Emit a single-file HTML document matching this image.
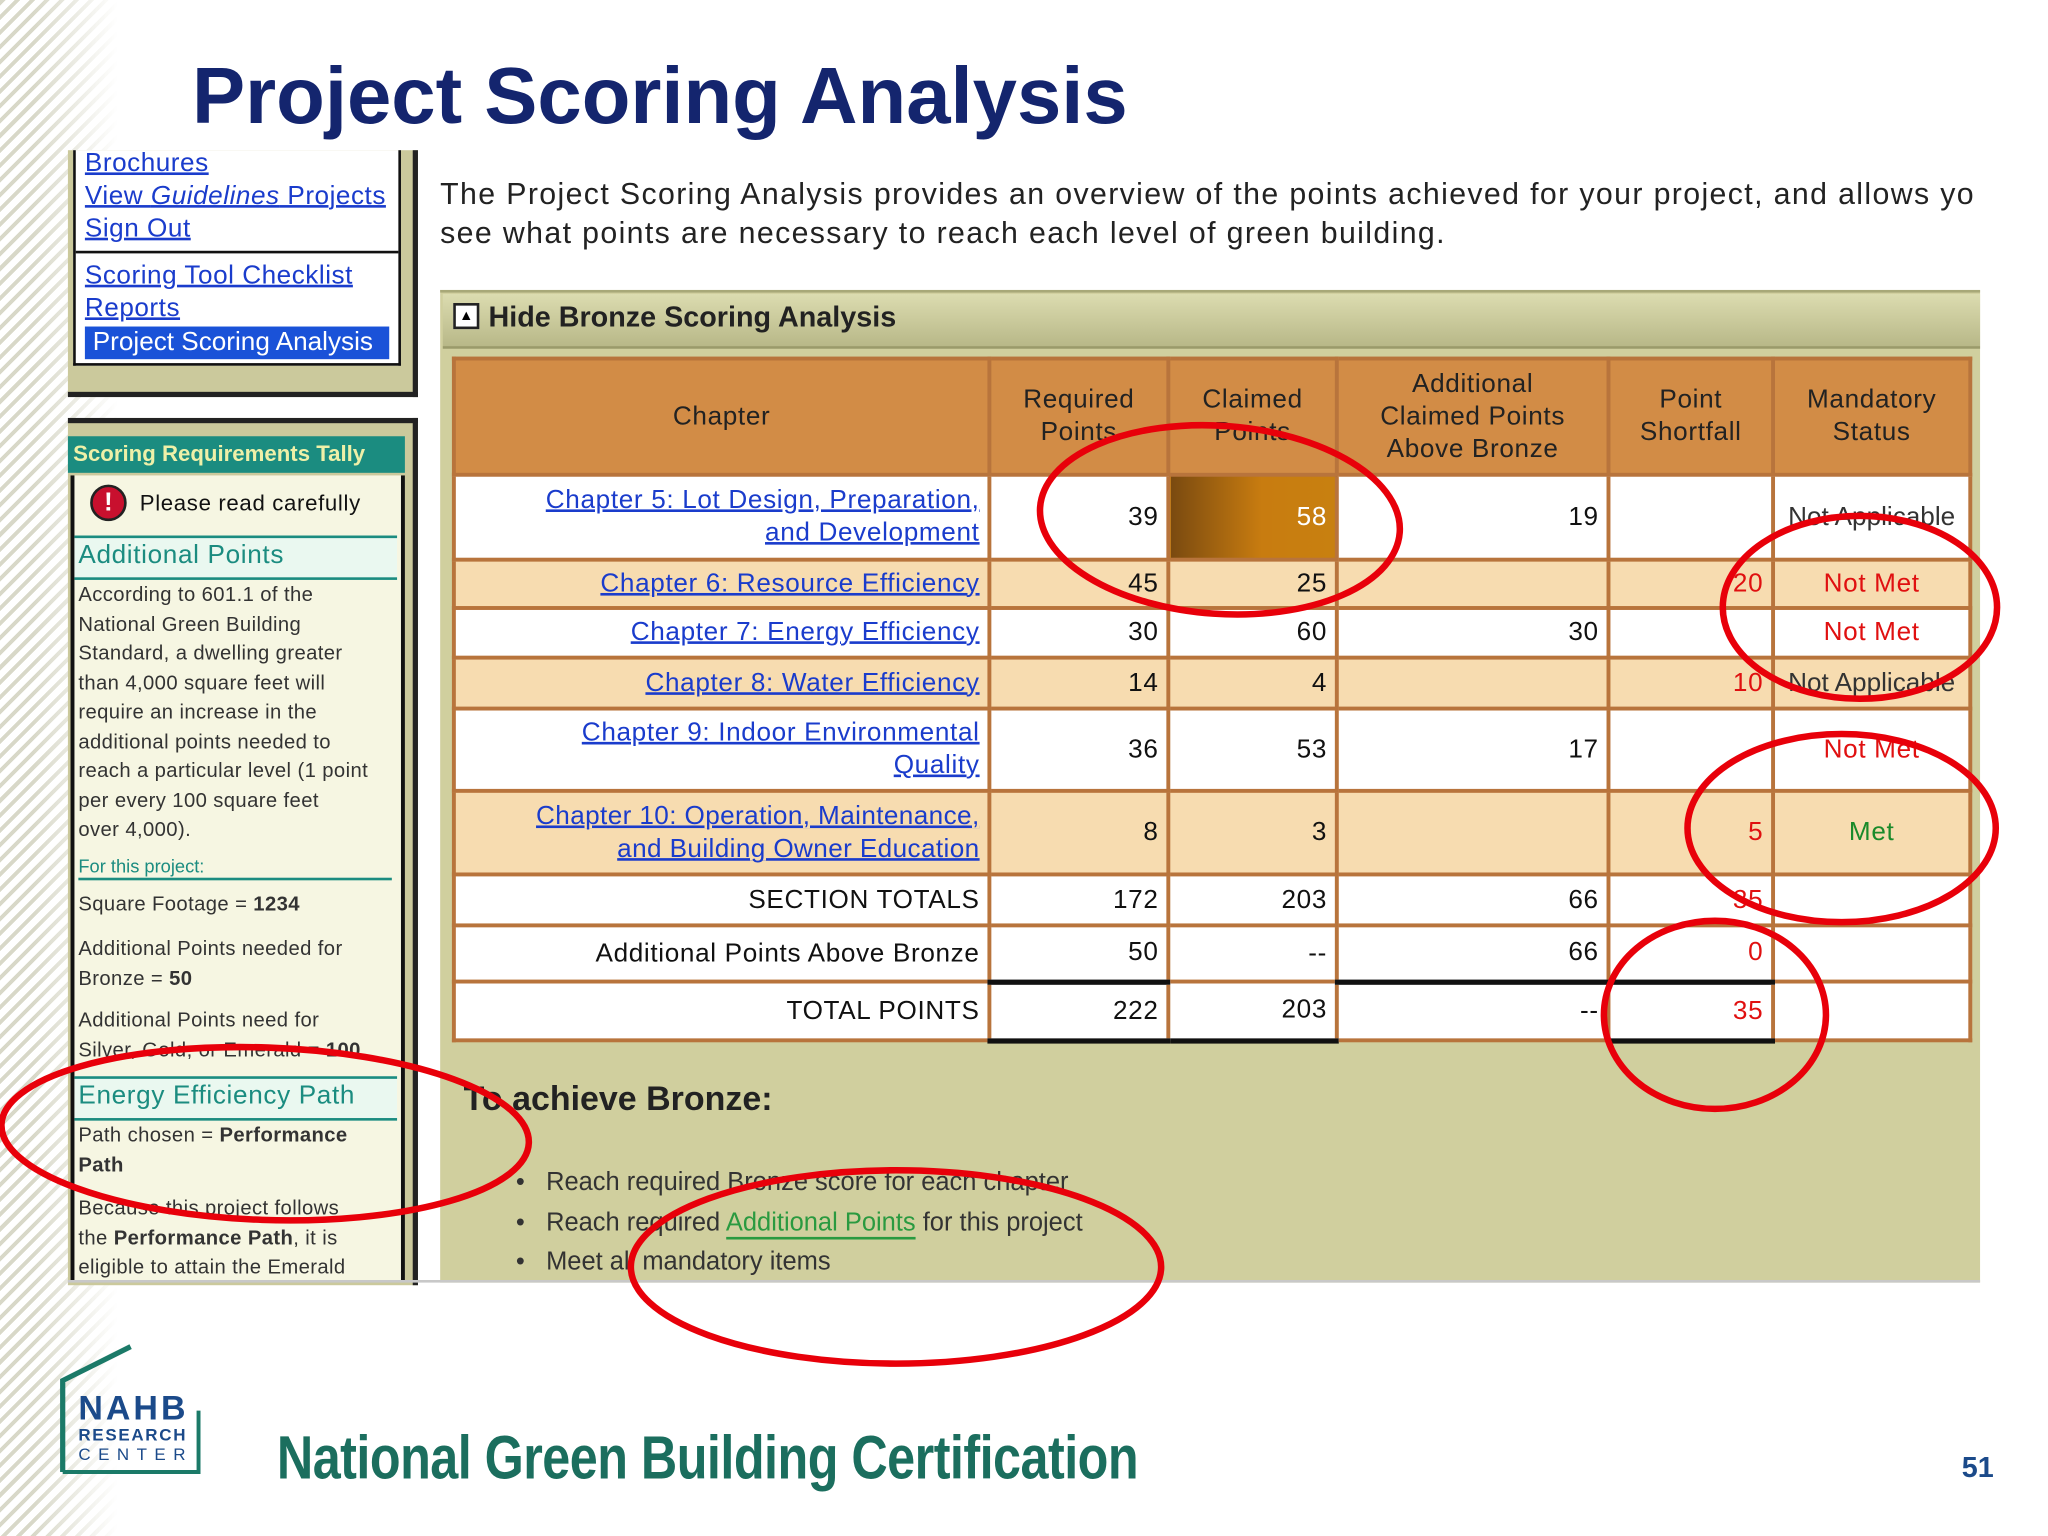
<!DOCTYPE html>
<html><head><meta charset="utf-8"><style>
html,body{margin:0;padding:0;width:2048px;height:1536px;overflow:hidden;background:#fff}
#w{position:absolute;left:0;top:0;width:1568px;height:1176px;transform:scale(1.30612);transform-origin:0 0;font-family:"Liberation Sans",sans-serif;background:#fff}
.a{position:absolute}
.stripes{left:0;top:0;width:90px;height:1176px;background:repeating-linear-gradient(135deg,#d8d8c8 0 3px,#fff 3px 8px);-webkit-mask-image:linear-gradient(90deg,#000 0,#000 25px,transparent 90px);mask-image:linear-gradient(90deg,#000 0,#000 25px,transparent 90px)}
.lnk{color:#1a3ccc;text-decoration:underline}
.nav{font-size:20px;line-height:25px;letter-spacing:0.4px}
.lp{font-size:15.5px;color:#333;line-height:22.5px;letter-spacing:0.3px;white-space:nowrap}
table{border-collapse:collapse;position:absolute;left:346px;top:273px;table-layout:fixed}
td{border:3px solid #b8743c;font-size:20px;padding:0 6px;text-align:right;color:#111;letter-spacing:0.5px}
th{border:3px solid #b8743c;background:#d28c46;font-weight:normal;font-size:20px;color:#222;line-height:25px;letter-spacing:0.5px}
.p{background:#f7dcb0}
.w{background:#fff}
.r{color:#e01010}
td.ctr{text-align:center}
</style></head><body><div id="w">
<div class="a stripes"></div>
<div class="a" style="left:147px;top:38px;font-size:61px;font-weight:bold;color:#14256e;letter-spacing:0px">Project Scoring Analysis</div>

<div class="a" style="left:52px;top:115px;width:264px;height:185px;background:#cbc99c;border-right:4px solid #222;border-bottom:4px solid #222"></div>
<div class="a" style="left:56px;top:115px;width:247px;height:163px;background:#fff;border:2px solid #111;border-top:none"></div>
<div class="a" style="left:58px;top:192px;width:247px;height:2px;background:#111"></div>
<div class="a nav" style="left:65px;top:113px"><span class="lnk">Brochures</span><br><span class="lnk">View <i>Guidelines</i> Projects</span><br><span class="lnk">Sign Out</span></div>
<div class="a nav" style="left:65px;top:199px"><span class="lnk">Scoring Tool Checklist</span><br><span class="lnk">Reports</span></div>
<div class="a" style="left:65px;top:250px;width:233px;height:25px;background:#1a52d8;color:#fff;font-size:20px;line-height:25px;padding-left:6px;box-sizing:border-box;white-space:nowrap;overflow:hidden">Project Scoring Analysis</div>

<div class="a" style="left:52px;top:320px;width:264px;height:660px;background:#cbc99c;border-top:4px solid #222;border-right:4px solid #222"></div>
<div class="a" style="left:52px;top:334px;width:258px;height:28px;background:#1b8c80;color:#eef0a8;font-weight:bold;font-size:17px;line-height:28px;padding-left:4px;box-sizing:border-box;white-space:nowrap">Scoring Requirements Tally</div>
<div class="a" style="left:54px;top:364px;width:250px;height:616px;background:#f6f6e2;border-left:3px solid #111;border-right:3px solid #111"></div>
<div class="a" style="left:69px;top:371px;width:28px;height:28px;border-radius:50%;background:#c8102e;border:2px solid #222;box-sizing:border-box;color:#fff;font-weight:bold;font-size:20px;text-align:center;line-height:24px">!</div>
<div class="a" style="left:107px;top:376px;font-size:17px;color:#111;letter-spacing:0.5px">Please read carefully</div>
<div class="a" style="left:57px;top:410px;width:247px;height:30px;background:#eaf8f0;border-top:2px solid #1b8c80;border-bottom:2px solid #1b8c80"></div>
<div class="a" style="left:60px;top:414px;font-size:20px;color:#1b8c80;letter-spacing:0.5px">Additional Points</div>
<div class="a lp" style="left:60px;top:445px">According to 601.1 of the<br>National Green Building<br>Standard, a dwelling greater<br>than 4,000 square feet will<br>require an increase in the<br>additional points needed to<br>reach a particular level (1 point<br>per every 100 square feet<br>over 4,000).</div>
<div class="a" style="left:60px;top:655px;font-size:14px;color:#1b8c80">For this project:</div>
<div class="a" style="left:60px;top:672px;width:240px;height:2px;background:#1b8c80"></div>
<div class="a lp" style="left:60px;top:682px">Square Footage = <b>1234</b></div>
<div class="a lp" style="left:60px;top:716px">Additional Points needed for<br>Bronze = <b>50</b></div>
<div class="a lp" style="left:60px;top:771px">Additional Points need for<br>Silver, Gold, or Emerald = <b>100</b></div>
<div class="a" style="left:57px;top:824px;width:247px;height:30px;background:#eaf8f0;border-top:2px solid #1b8c80;border-bottom:2px solid #1b8c80"></div>
<div class="a" style="left:60px;top:828px;font-size:20px;color:#1b8c80;letter-spacing:0.5px">Energy Efficiency Path</div>
<div class="a lp" style="left:60px;top:859px">Path chosen = <b>Performance<br>Path</b></div>
<div class="a lp" style="left:60px;top:915px;height:65px;overflow:hidden">Because this project follows<br>the <b>Performance Path</b>, it is<br>eligible to attain the Emerald</div>

<div class="a" style="left:337px;top:133px;font-size:23.2px;line-height:30px;color:#222;white-space:nowrap;width:1180px;overflow:hidden;letter-spacing:1.05px">The Project Scoring Analysis provides an overview of the points achieved for your project, and allows yo<br>see what points are necessary to reach each level of green building.</div>

<div class="a" style="left:337px;top:222px;width:1179px;height:758px;background:#d0cf9e;border-top:2px solid #a8a878"></div>
<div class="a" style="left:339px;top:225px;width:1177px;height:40px;background:linear-gradient(#dcdcb0,#b8b888);border-bottom:2px solid #9a9a6a"></div>
<div class="a" style="left:347px;top:232px;width:16px;height:16px;border:2px solid #222;background:#fff;font-size:11px;line-height:16px;text-align:center">▲</div>
<div class="a" style="left:374px;top:230px;font-size:22px;font-weight:bold;color:#222">Hide Bronze Scoring Analysis</div>

<table>
<colgroup><col style="width:410px"><col style="width:137px"><col style="width:129px"><col style="width:208px"><col style="width:126px"><col style="width:151px"></colgroup>
<tr style="height:89px"><th>Chapter</th><th>Required<br>Points</th><th>Claimed<br>Points</th><th>Additional<br>Claimed Points<br>Above Bronze</th><th>Point<br>Shortfall</th><th>Mandatory<br>Status</th></tr>
<tr style="height:65px" class="w"><td style="line-height:25px"><span class="lnk">Chapter 5: Lot Design, Preparation,<br>and Development</span></td><td>39</td><td style="background:linear-gradient(90deg,#7a4a10,#c87c10 55%,#c88010);color:#fff">58</td><td>19</td><td></td><td class="ctr" style="color:#333;letter-spacing:0">Not Applicable</td></tr>
<tr style="height:37px" class="p"><td><span class="lnk">Chapter 6: Resource Efficiency</span></td><td>45</td><td>25</td><td></td><td class="r">20</td><td class="ctr r">Not Met</td></tr>
<tr style="height:38px" class="w"><td><span class="lnk">Chapter 7: Energy Efficiency</span></td><td>30</td><td>60</td><td>30</td><td></td><td class="ctr r">Not Met</td></tr>
<tr style="height:39px" class="p"><td><span class="lnk">Chapter 8: Water Efficiency</span></td><td>14</td><td>4</td><td></td><td class="r">10</td><td class="ctr" style="color:#333;letter-spacing:0">Not Applicable</td></tr>
<tr style="height:63px" class="w"><td style="line-height:25px"><span class="lnk">Chapter 9: Indoor Environmental<br>Quality</span></td><td>36</td><td>53</td><td>17</td><td></td><td class="ctr r">Not Met</td></tr>
<tr style="height:64px" class="p"><td style="line-height:25px;letter-spacing:0.3px"><span class="lnk">Chapter 10: Operation, Maintenance,<br>and Building Owner Education</span></td><td>8</td><td>3</td><td></td><td class="r">5</td><td class="ctr" style="color:#1a8a2a">Met</td></tr>
<tr style="height:39px" class="w"><td>SECTION TOTALS</td><td>172</td><td>203</td><td>66</td><td class="r">35</td><td></td></tr>
<tr style="height:43px" class="w"><td>Additional Points Above Bronze</td><td style="border-bottom:4px solid #111">50</td><td>--</td><td style="border-bottom:4px solid #111">66</td><td class="r" style="border-bottom:4px solid #111">0</td><td></td></tr>
<tr style="height:45px" class="w"><td>TOTAL POINTS</td><td style="border-bottom:4px solid #111">222</td><td style="border-bottom:4px solid #111">203</td><td>--</td><td class="r" style="border-bottom:4px solid #111">35</td><td></td></tr>
</table>

<div class="a" style="left:355px;top:826px;font-size:26px;font-weight:bold;color:#222">To achieve Bronze:</div>
<div class="a" style="left:395px;top:890px;font-size:19.5px;line-height:30.5px;color:#333">
<div>•&nbsp;&nbsp; Reach required Bronze score for each chapter</div>
<div>•&nbsp;&nbsp; Reach required <span style="color:#2a9a40;border-bottom:2px solid #2a9a40">Additional Points</span> for this project</div>
<div>•&nbsp;&nbsp; Meet all mandatory items</div></div>
<div class="a" style="left:52px;top:980px;width:1464px;height:2px;background:#c8c8c8"></div>

<svg class="a" style="left:40px;top:1025px" width="130" height="112" viewBox="0 0 130 112">
<path d="M8 102 V32 L60 6" fill="none" stroke="#1b7a68" stroke-width="4"/>
<path d="M8 102 H112 V55" fill="none" stroke="#1b7a68" stroke-width="3"/>
<text x="20" y="62" font-family="Liberation Sans,sans-serif" font-weight="bold" font-size="26" fill="#1b4a8a" textLength="82">NAHB</text>
<text x="20" y="78" font-family="Liberation Sans,sans-serif" font-weight="bold" font-size="13" fill="#1b4a8a" textLength="82">RESEARCH</text>
<text x="20" y="93" font-family="Liberation Sans,sans-serif" font-size="13" fill="#1b4a8a" textLength="82">CENTER</text>
</svg>
<div class="a" style="left:212px;top:1088px;font-weight:bold;font-size:47px;color:#1b6e5e;letter-spacing:-0.5px;transform:scaleX(0.82);transform-origin:0 0;white-space:nowrap">National Green Building Certification</div>
<div class="a" style="left:1502px;top:1111px;font-weight:bold;font-size:22px;color:#1b4a8a">51</div>

<svg class="a" style="left:0;top:0" width="1568" height="1176">
<g fill="none" stroke="#e8000a" stroke-width="5">
<ellipse cx="934" cy="398" rx="138" ry="72" transform="rotate(4 934 398)"/>
<ellipse cx="1424" cy="465" rx="105" ry="70"/>
<ellipse cx="1410" cy="634" rx="118" ry="72"/>
<ellipse cx="1313" cy="777" rx="85" ry="72"/>
<ellipse cx="203" cy="868" rx="202" ry="66" transform="rotate(2 203 868)"/>
<ellipse cx="686" cy="970" rx="203" ry="74"/>
</g></svg>
</div></body></html>
